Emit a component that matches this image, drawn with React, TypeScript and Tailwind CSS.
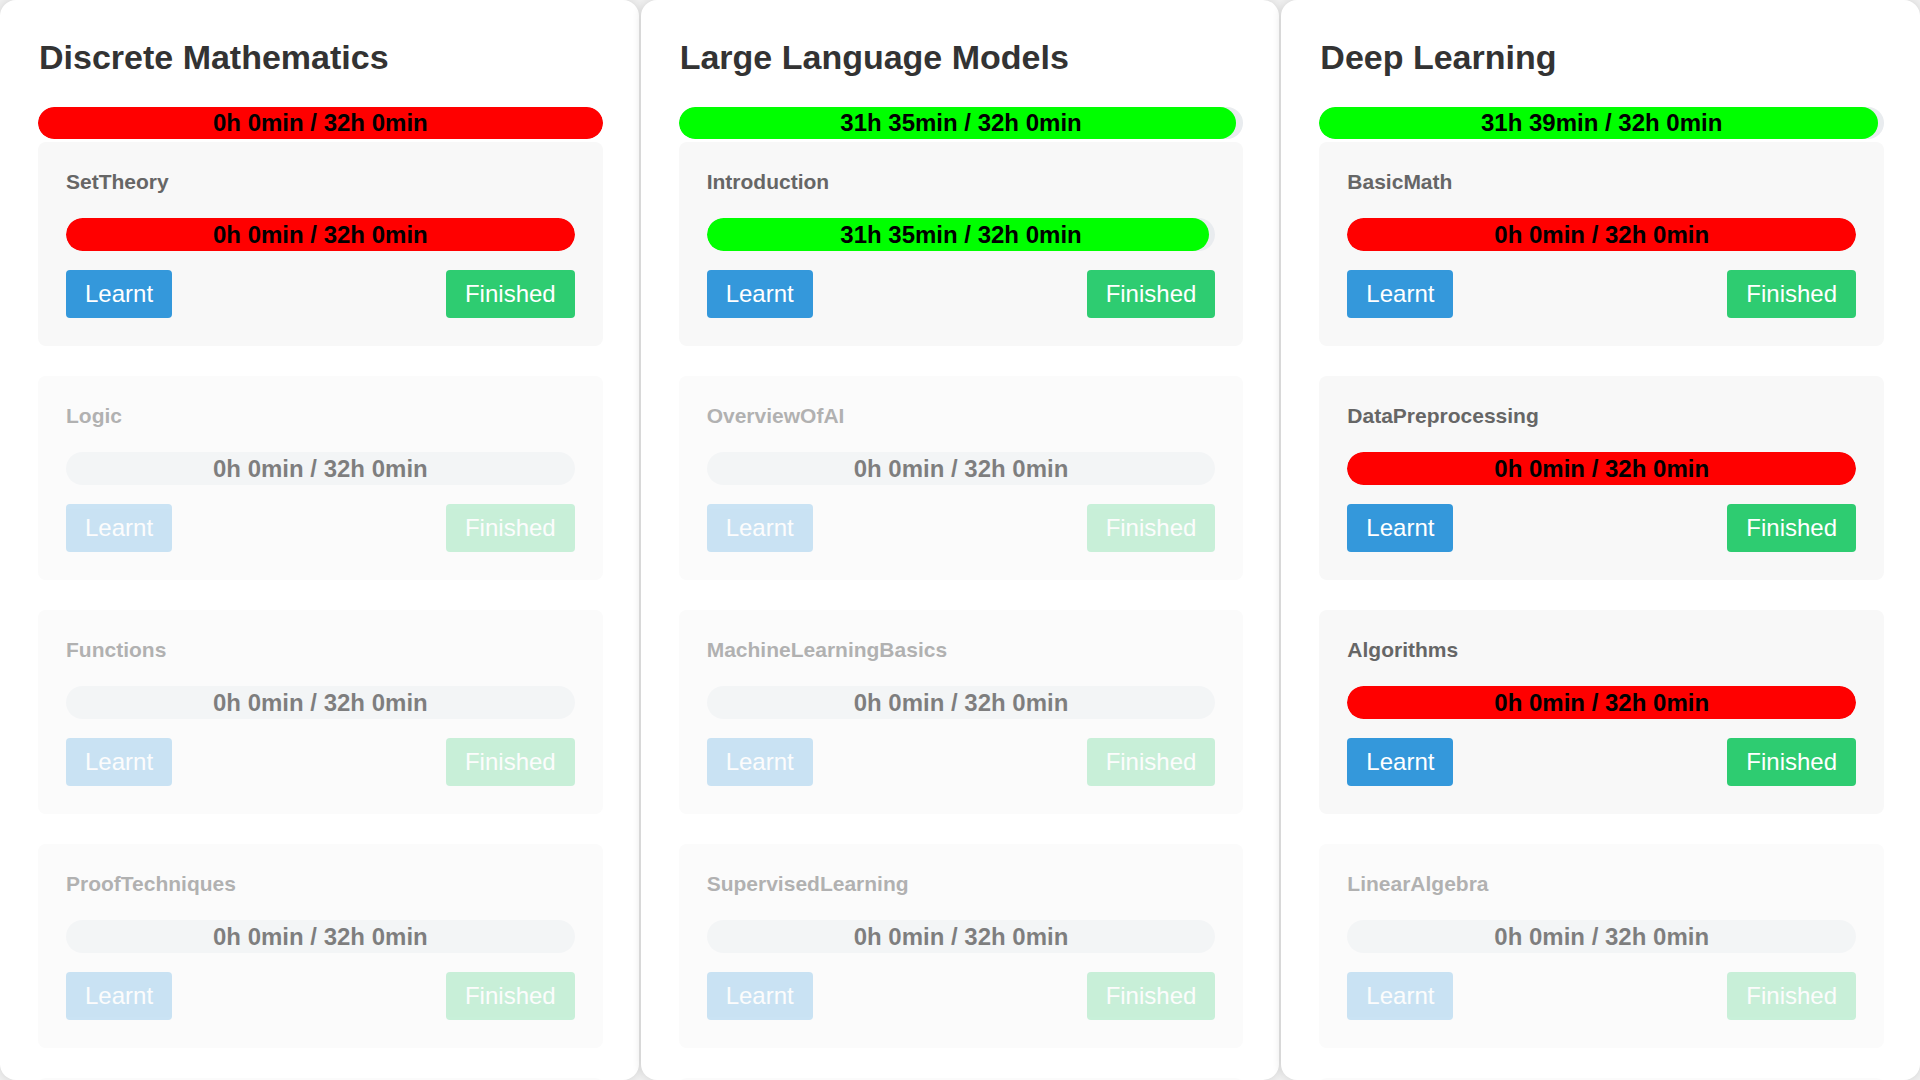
import React from "react";

type Item = { name: string; active: boolean; text: string; color?: string; pct?: number };
type Course = { title: string; text: string; color: string; pct: number; items: Item[] };

const EMPTY = "0h 0min / 32h 0min";

const courses: Course[] = [
  {
    title: "Discrete Mathematics",
    text: EMPTY,
    color: "#ff0000",
    pct: 100,
    items: [
      { name: "SetTheory", active: true, text: EMPTY, color: "#ff0000", pct: 100 },
      { name: "Logic", active: false, text: EMPTY },
      { name: "Functions", active: false, text: EMPTY },
      { name: "ProofTechniques", active: false, text: EMPTY },
      { name: "GraphTheory", active: false, text: EMPTY },
    ],
  },
  {
    title: "Large Language Models",
    text: "31h 35min / 32h 0min",
    color: "#00ff00",
    pct: (31 * 60 + 35) / (32 * 60) * 100,
    items: [
      { name: "Introduction", active: true, text: "31h 35min / 32h 0min", color: "#00ff00", pct: (31 * 60 + 35) / (32 * 60) * 100 },
      { name: "OverviewOfAI", active: false, text: EMPTY },
      { name: "MachineLearningBasics", active: false, text: EMPTY },
      { name: "SupervisedLearning", active: false, text: EMPTY },
      { name: "UnsupervisedLearning", active: false, text: EMPTY },
    ],
  },
  {
    title: "Deep Learning",
    text: "31h 39min / 32h 0min",
    color: "#00ff00",
    pct: (31 * 60 + 39) / (32 * 60) * 100,
    items: [
      { name: "BasicMath", active: true, text: EMPTY, color: "#ff0000", pct: 100 },
      { name: "DataPreprocessing", active: true, text: EMPTY, color: "#ff0000", pct: 100 },
      { name: "Algorithms", active: true, text: EMPTY, color: "#ff0000", pct: 100 },
      { name: "LinearAlgebra", active: false, text: EMPTY },
      { name: "Calculus", active: false, text: EMPTY },
    ],
  },
];

function Bar({ text, color, pct, h }: { text: string; color?: string; pct?: number; h: string }) {
  return (
    <div className={`relative ${h} w-full rounded-full bg-[#e9ecef] overflow-hidden`}>
      {color && (
        <div
          className="absolute left-0 top-0 bottom-0 rounded-full"
          style={{ width: `${pct}%`, backgroundColor: color }}
        />
      )}
      <div className="relative flex h-full items-center justify-center text-[24px] font-bold leading-none text-black">
        {text}
      </div>
    </div>
  );
}

function Card({ item }: { item: Item }) {
  return (
    <div
      className={`mb-[30px] rounded-[8px] bg-[#f8f8f8] p-[28px] ${item.active ? "" : "opacity-50"}`}
    >
      <div className="mb-[24px] text-[21px] font-bold leading-[24px] text-[#666666]">{item.name}</div>
      <Bar text={item.text} color={item.color} pct={item.pct} h="h-[33px]" />
      <div className={`mt-[19px] flex items-center justify-between ${item.active ? "" : "opacity-50"}`}>
        <button className="flex h-[48px] items-center rounded-[4px] bg-[#3498db] px-[19px] text-[24px] leading-none text-white">
          Learnt
        </button>
        <button className="flex h-[48px] items-center rounded-[4px] bg-[#2ecc71] px-[19px] text-[24px] leading-none text-white">
          Finished
        </button>
      </div>
    </div>
  );
}

function Panel({ c }: { c: Course }) {
  return (
    <div className="min-w-0 flex-1 rounded-[16px] bg-white pl-[38px] pr-[36px] pt-[38px] shadow-[0_0_10px_rgba(0,0,0,0.12)]">
      <h1 className="mb-[30px] pl-[1px] text-[34px] font-bold leading-[39px] text-[#333333]">{c.title}</h1>
      <Bar text={c.text} color={c.color} pct={c.pct} h="h-[32px]" />
      <div className="mt-[3px]">
        {c.items.map((it) => (
          <Card key={it.name} item={it} />
        ))}
      </div>
    </div>
  );
}

export default function App() {
  return (
    <div
      className="flex h-[1080px] w-[1920px] gap-[2px] overflow-hidden bg-[#f0f0f0]"
      style={{ fontFamily: '"Liberation Sans", Arial, sans-serif' }}
    >
      {courses.map((c) => (
        <Panel key={c.title} c={c} />
      ))}
    </div>
  );
}
